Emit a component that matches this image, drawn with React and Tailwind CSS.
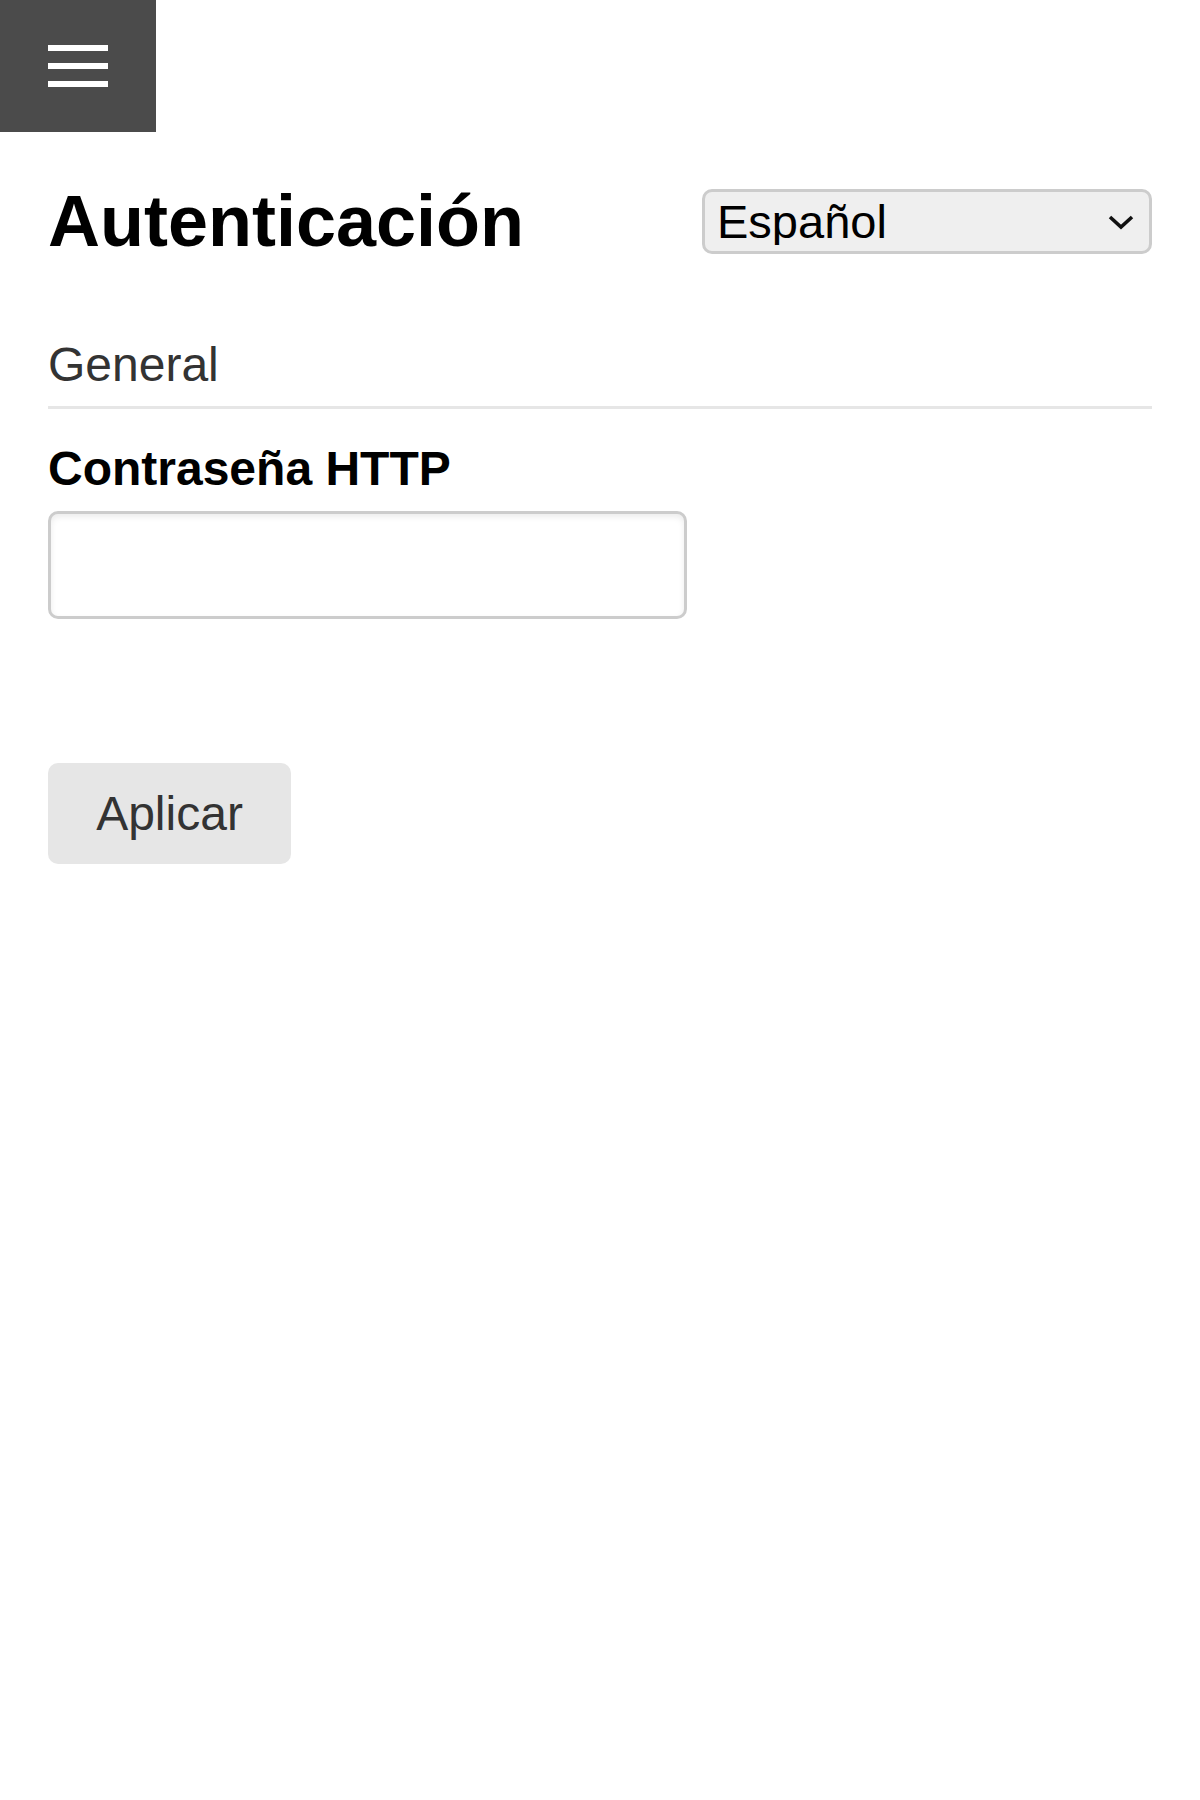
import { useState } from "react";

const font = { fontFamily: '"Liberation Sans", Arial, sans-serif' };

function MenuButton() {
  return (
    <button className="flex h-[132px] w-[156px] flex-col justify-start bg-[#4b4b4b] pt-[45px] pl-[48px]">
      <span className="block h-[6px] w-[60px] bg-white" />
      <span className="mt-[12px] block h-[6px] w-[60px] bg-white" />
      <span className="mt-[12px] block h-[6px] w-[60px] bg-white" />
    </button>
  );
}

function LanguageSelect() {
  return (
    <div className="relative h-[65px] w-[450px]">
      <select
        defaultValue="es"
        className="h-full w-full appearance-none rounded-[10px] border-[3px] border-[#cccccc] bg-[#efefef] pl-[12px] text-[47px] leading-none text-black outline-none"
        style={font}
      >
        <option value="es">Español</option>
        <option value="en">English</option>
      </select>
      <svg
        className="pointer-events-none absolute top-[25px] right-[18px]"
        width="26"
        height="17"
        viewBox="0 0 26 17"
        fill="none"
      >
        <path d="M2 3 L13 13 L24 3" stroke="#111" strokeWidth="3.6" />
      </svg>
    </div>
  );
}

export default function App() {
  const [pass, setPass] = useState("");

  return (
    <div className="min-h-[1800px] bg-white text-black" style={font}>
      <MenuButton />

      <div className="px-[48px]">
        <div className="mt-[48px] flex items-center justify-between">
          <h1 className="text-[72px] leading-[82px] font-bold">Autenticación</h1>
          <LanguageSelect />
        </div>

        <h2 className="mt-[75px] text-[48px] leading-[55px] text-[#333333]">General</h2>
        <div className="mt-[14px] h-[3px] bg-[#e6e6e6]" />

        <label className="mt-[32px] block text-[48px] leading-[55px] font-bold">
          Contraseña HTTP
        </label>
        <input
          type="password"
          value={pass}
          onChange={(e) => setPass(e.target.value)}
          className="mt-[15px] block h-[108px] w-[639px] rounded-[10px] border-[3px] border-[#cccccc] bg-white px-4 text-[48px] shadow-[inset_0_3px_6px_rgba(0,0,0,0.08)] outline-none"
        />

        <button className="mt-[144px] h-[101px] w-[243px] rounded-[10px] bg-[#e6e6e6] text-[48px] text-[#333333]">
          Aplicar
        </button>
      </div>
    </div>
  );
}
